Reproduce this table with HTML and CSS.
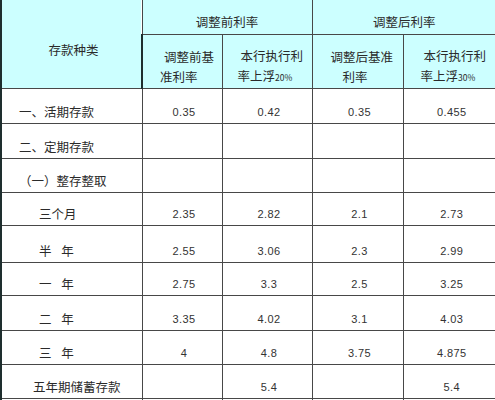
FILE: index.html
```html
<!DOCTYPE html>
<html lang="zh">
<head>
<meta charset="utf-8">
<title>存款利率</title>
<link rel="stylesheet" href="styles.css">
</head>
<body>
<table class="rates">
  <colgroup>
    <col class="c1"><col class="c2"><col class="c3"><col class="c4"><col class="c5">
  </colgroup>
  <tr class="h1">
    <td class="hd kind" rowspan="2">存款种类</td>
    <td class="hd grp" colspan="2">调整前利率</td>
    <td class="hd grp last" colspan="2">调整后利率</td>
  </tr>
  <tr class="h2">
    <td class="hd sub s2"><span class="a">调整前基</span><br><span class="b">准利率</span></td>
    <td class="hd sub s3"><span class="a">本行执行利</span><br><span class="b">率上浮<small>20%</small></span></td>
    <td class="hd sub s4"><span class="a">调整后基准</span><br><span class="b">利率</span></td>
    <td class="hd sub s5 last"><span class="a">本行执行利</span><br><span class="b">率上浮<small>30%</small></span></td>
  </tr>
  <tr class="r35">
    <td class="name n1">一、活期存款</td><td class="num">0.35</td><td class="num">0.42</td><td class="num">0.35</td><td class="num last">0.455</td>
  </tr>
  <tr class="r35">
    <td class="name n1">二、定期存款</td><td></td><td></td><td></td><td class="last"></td>
  </tr>
  <tr class="r34">
    <td class="name n1">（一）整存整取</td><td></td><td></td><td></td><td class="last"></td>
  </tr>
  <tr class="r33">
    <td class="name n3">三个月</td><td class="num">2.35</td><td class="num">2.82</td><td class="num">2.1</td><td class="num last">2.73</td>
  </tr>
  <tr class="r37">
    <td class="name n3 wide">半 年</td><td class="num">2.55</td><td class="num">3.06</td><td class="num">2.3</td><td class="num last">2.99</td>
  </tr>
  <tr class="r33">
    <td class="name n3 wide">一 年</td><td class="num">2.75</td><td class="num">3.3</td><td class="num">2.5</td><td class="num last">3.25</td>
  </tr>
  <tr class="r35">
    <td class="name n3 wide">二 年</td><td class="num">3.35</td><td class="num">4.02</td><td class="num">3.1</td><td class="num last">4.03</td>
  </tr>
  <tr class="r34">
    <td class="name n3 wide">三 年</td><td class="num">4</td><td class="num">4.8</td><td class="num">3.75</td><td class="num last">4.875</td>
  </tr>
  <tr class="r34">
    <td class="name n5">五年期储蓄存款</td><td></td><td class="num">5.4</td><td></td><td class="num last">5.4</td>
  </tr>
  <tr class="r34">
    <td class="name"></td><td></td><td></td><td></td><td class="last"></td>
  </tr>
</table>
</body>
</html>
```

FILE: styles.css
```css
html, body {
  margin: 0;
  padding: 0;
  background: #ffffff;
  overflow: hidden;
}

.rates {
  border-collapse: collapse;
  table-layout: fixed;
  width: 495px;
  font-family: "Noto Sans CJK SC", "Noto Sans", sans-serif;
  font-size: 12.5px;
  color: #2a2a2a;
}

.c1 { width: 141px; }
.c2 { width: 80px; }
.c3 { width: 90px; }
.c4 { width: 91px; }
.c5 { width: 93px; }

.rates td {
  border: 1px solid #484848;
  padding: 0 0 4px 0;
  line-height: 14px;
  vertical-align: bottom;
  white-space: nowrap;
  overflow: hidden;
}

.rates td:first-child {
  border-left: 2px solid #1e2e2e;
}

.rates td.last {
  border-right: none;
}

.h1 td {
  border-top: none;
}

.hd {
  background: #ccffff;
}

.h1 { height: 34px; }
.h2 { height: 54px; }

.kind {
  vertical-align: top !important;
  text-align: center;
  padding: 43px 0 0 4px !important;
}

.grp {
  text-align: center;
  padding-bottom: 5px !important;
}

.sub {
  line-height: 20px !important;
  padding-bottom: 1px !important;
  text-align: left;
}

.sub small {
  font-size: 8.5px;
}

.s2 { padding-left: 17px !important; }
.s2 .a { margin-left: 4px; }
.s3 { padding-left: 15px !important; }
.s3 .a { margin-left: 3px; }
.s4 { padding-left: 18px !important; }
.s4 .b { margin-left: 12px; }
.s5 { padding-left: 17px !important; }
.s5 .a { margin-left: 3px; }

.r33 { height: 33px; }
.r34 { height: 34px; }
.r35 { height: 35px; }
.r37 { height: 37px; }

.n1 { padding-left: 17px !important; }
.n3 { padding-left: 37px !important; }
.n5 { padding-left: 31px !important; }

.wide {
  word-spacing: 7px;
}

.num {
  text-align: center;
  font-family: "Liberation Sans", Arial, sans-serif;
  font-size: 11px;
  letter-spacing: 0.4px;
  color: #333333;
  padding-left: 4px !important;
}
```
